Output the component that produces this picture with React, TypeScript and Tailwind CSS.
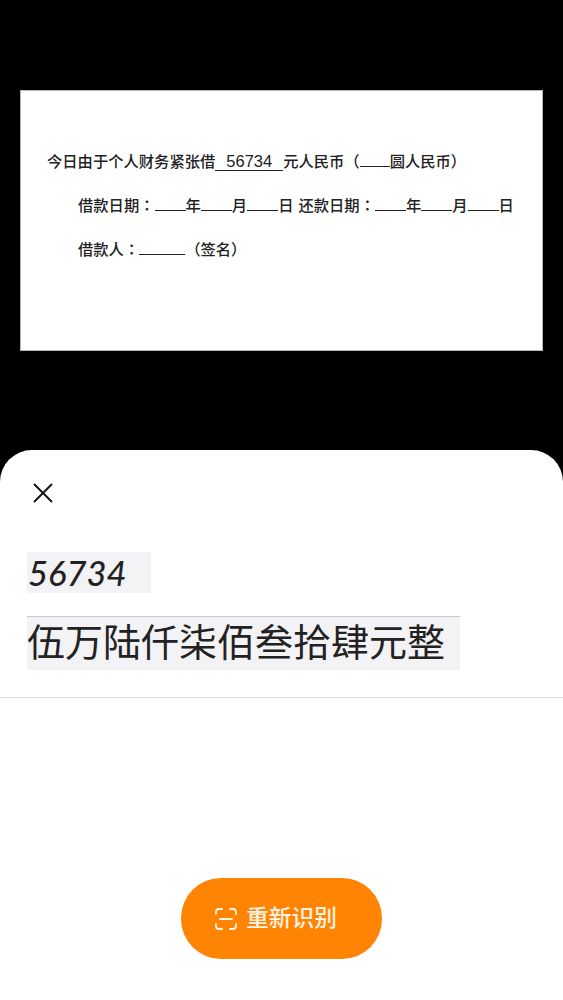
const cjk = 'font-["Liberation_Sans","Noto_Sans_CJK_SC",sans-serif]'

function DocLine({ children, indent }: { children: React.ReactNode; indent?: boolean }) {
  return (
    <p className={`h-[21px] whitespace-nowrap text-[15.3px] leading-[21px] font-medium text-[#222] ${indent ? 'pl-[57px]' : 'pl-[26px]'}`}>
      {children}
    </p>
  )
}

function Blank({ w }: { w: string }) {
  return <span className={`inline-block h-[14px] border-b border-[#222] align-baseline ${w}`} />
}

function Colon() {
  return <span className='font-["Noto_Sans_CJK_TC",sans-serif] leading-[0]'>：</span>
}

export default function App() {
  return (
    <div className={`flex h-[1000px] w-full flex-col bg-black ${cjk}`}>
      <div className="h-[450px] px-5 pt-[90px]">
        <div className="flex h-[261px] w-[523px] flex-col gap-[23px] border border-[#b4b6bc] bg-white pt-[60px]">
          <DocLine>
            今日由于个人财务紧张借
            <span className="border-b border-[#222] px-[11px] text-[16.5px] font-normal">56734</span>
            元人民币（<Blank w="w-[30px]" />圆人民币）
          </DocLine>
          <DocLine indent>
            借款日期<Colon /><Blank w="w-[31px]" />年<Blank w="w-[31px]" />月<Blank w="w-[31px]" />日
            <span className="ml-[5px]">还款日期</span><Colon />
            <Blank w="w-[31px]" />年<Blank w="w-[31px]" />月<Blank w="w-[31px]" />日
          </DocLine>
          <DocLine indent>
            借款人<Colon /><Blank w="w-[46px]" />（签名）
          </DocLine>
        </div>
      </div>

      <div className="flex flex-1 flex-col rounded-t-[32px] bg-white">
        <button className="ml-[33px] mt-[33px] h-5 w-5 text-[#111]">
          <svg viewBox="0 0 20 20" className="h-5 w-5" fill="none" stroke="currentColor" strokeWidth="1.9">
            <path d="M1 1 L19 19 M19 1 L1 19" />
          </svg>
        </button>

        <div className="ml-[27px] mt-[49px] flex h-[41px] w-[124px] items-center bg-[#f3f2f5] pl-[1px] font-['Lato',sans-serif] text-[34.5px] font-medium italic text-[#222]">
          56734
        </div>
        <div className="ml-[27px] mt-[23px] flex h-[54px] w-[433px] items-center border-t border-[#c8c8c8] bg-[#f3f2f5] pb-[2px] text-[38px] leading-none text-[#222]">
          伍万陆仟柒佰叁拾肆元整
        </div>
        <div className="mt-[27px] h-px bg-[#dcdcdc]" />

        <div className="mt-[180px] flex justify-center pr-[1px]">
          <button className="flex h-[81px] w-[201px] items-center justify-center gap-[9px] rounded-[40px] bg-[#ff8404] pr-[10px] text-[22.7px] font-medium text-[#fff3e2]">
            <svg viewBox="0 0 22 22" className="h-[22px] w-[22px]" fill="none" stroke="currentColor" strokeWidth="1.8" strokeLinecap="round">
              <path d="M7 1 H4 Q1 1 1 4 V6 M15 1 H18 Q21 1 21 4 V6 M1 16 V18 Q1 21 4 21 H7 M21 16 V18 Q21 21 18 21 H15 M5 11 H17" />
            </svg>
            重新识别
          </button>
        </div>
      </div>
    </div>
  )
}
